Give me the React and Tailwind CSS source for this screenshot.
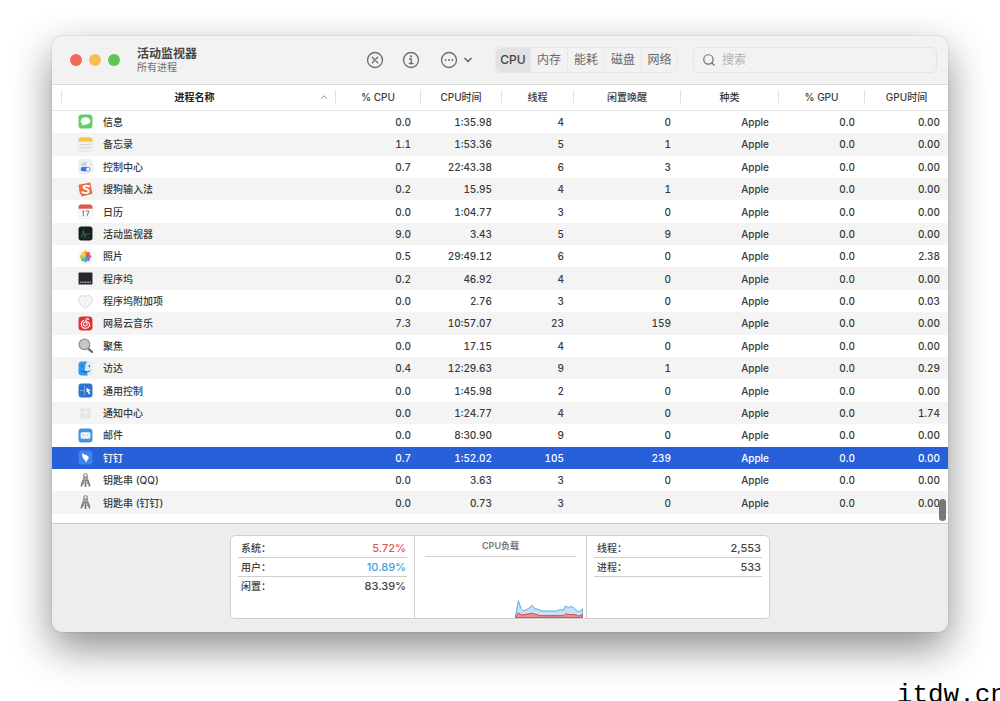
/**
 * Activity Monitor
 *
 * Process list window with toolbar, process table and CPU summary footer.
 */

import React from 'react';
import { ChevronDown, ChevronUp, Search } from 'lucide-react';

const COLUMNS = [
  { key: 'name', label: '进程名称', width: '' },
  { key: 'cpu', label: '% CPU', width: 'w-[85px]' },
  { key: 'time', label: 'CPU时间', width: 'w-[81px]' },
  { key: 'threads', label: '线程', width: 'w-[72px]' },
  { key: 'wakes', label: '闲置唤醒', width: 'w-[107px]' },
  { key: 'kind', label: '种类', width: 'w-[98px]' },
  { key: 'gpu', label: '% GPU', width: 'w-[86px]' },
  { key: 'gpuTime', label: 'GPU时间', width: 'w-[83px]' },
];

const PROCESSES = [
  ['messages', '信息', '0.0', '1:35.98', '4', '0', '0.00'],
  ['notes', '备忘录', '1.1', '1:53.36', '5', '1', '0.00'],
  ['control', '控制中心', '0.7', '22:43.38', '6', '3', '0.00'],
  ['sogou', '搜狗输入法', '0.2', '15.95', '4', '1', '0.00'],
  ['calendar', '日历', '0.0', '1:04.77', '3', '0', '0.00'],
  ['activity', '活动监视器', '9.0', '3.43', '5', '9', '0.00'],
  ['photos', '照片', '0.5', '29:49.12', '6', '0', '2.38'],
  ['dock', '程序坞', '0.2', '46.92', '4', '0', '0.00'],
  ['extra', '程序坞附加项', '0.0', '2.76', '3', '0', '0.03'],
  ['netease', '网易云音乐', '7.3', '10:57.07', '23', '159', '0.00'],
  ['spotlight', '聚焦', '0.0', '17.15', '4', '0', '0.00'],
  ['finder', '访达', '0.4', '12:29.63', '9', '1', '0.29'],
  ['universal', '通用控制', '0.0', '1:45.98', '2', '0', '0.00'],
  ['notification', '通知中心', '0.0', '1:24.77', '4', '0', '1.74'],
  ['mail', '邮件', '0.0', '8:30.90', '9', '0', '0.00'],
  ['dingtalk', '钉钉', '0.7', '1:52.02', '105', '239', '0.00'],
  ['keychain', '钥匙串 (QQ)', '0.0', '3.63', '3', '0', '0.00'],
  ['keychain', '钥匙串 (钉钉)', '0.0', '0.73', '3', '0', '0.00'],
];

const PETALS = ['#f6a623', '#e8553f', '#c856a5', '#7d6fd0', '#4a9fe0', '#4fc08a', '#a5cc3f', '#f3d33b'];

const ICONS = {
  messages: (
    <>
      <rect x="1" y="1" width="26" height="26" rx="6" fill="#5fd063" />
      <ellipse cx="14" cy="13" rx="9" ry="7" fill="#fff" />
      <path d="M8 17l-1 5 6-3z" fill="#fff" />
    </>
  ),
  notes: (
    <>
      <rect x="1" y="1" width="26" height="26" rx="5" fill="#f2f1ee" stroke="#dddcd8" />
      <path d="M1 9V6a5 5 0 015-5h16a5 5 0 015 5v3z" fill="#f4c545" />
      <path d="M4 14h20M4 20h20" stroke="#cfcdc8" strokeWidth="1.5" />
    </>
  ),
  control: (
    <>
      <rect x="1" y="1" width="26" height="26" rx="6" fill="#eef0f4" stroke="#e0e3e8" />
      <rect x="6" y="6" width="17" height="7" rx="3.5" fill="#c9d3e6" />
      <circle cx="19" cy="9.500" r="3" fill="#fff" />
      <rect x="5" y="15" width="18" height="8" rx="4" fill="#3c75e0" />
      <circle cx="18.500" cy="19" r="3" fill="#fff" />
    </>
  ),
  sogou: (
    <>
      <path d="M1 5l22-4 4 21-20 5-4-8z" fill="#ec6b36" />
      <path d="M21 8c-5-2-11-1-11 2 0 4 10 2 10 7 0 4-7 5-12 2" fill="none" stroke="#fff" strokeWidth="3.500" strokeLinecap="round" />
    </>
  ),
  calendar: (
    <>
      <rect x="1" y="1" width="26" height="26" rx="6" fill="#fafafa" stroke="#dedede" />
      <path d="M1 9V6a5 5 0 015-5h16a5 5 0 015 5v3z" fill="#e2574f" />
      <path d="M8 14l2-1.500V23M14 13h6.500l-4 10" fill="none" stroke="#777" strokeWidth="1.800" />
    </>
  ),
  activity: (
    <>
      <rect x="1" y="1" width="26" height="26" rx="5" fill="#16201f" />
      <path d="M5 18h3l2-10 3 12 2-5h8" fill="none" stroke="#4a756a" strokeWidth="1.500" />
      <path d="M5 22h18" stroke="#3c5650" />
    </>
  ),
  photos: (
    <>
      <rect x="1" y="1" width="26" height="26" rx="6" fill="#fbfbfb" stroke="#ececec" />
      {PETALS.map((color, i) => (
        <ellipse key={color} cx="14" cy="8.500" rx="3.500" ry="5.500" fill={color} opacity="0.9" transform={`rotate(${i * 45} 14 14)`} />
      ))}
    </>
  ),
  dock: (
    <>
      <rect x="1" y="3" width="26" height="22" rx="1" fill="#25272a" />
      <path d="M4 21h20" stroke="#a9abae" strokeWidth="2.500" strokeDasharray="2 1" />
    </>
  ),
  extra: (
    <>
      <path d="M14 27L4 19 1 9l5-6 8 1 8-1 5 6-3 10z" fill="#f6f6f6" stroke="#cfcfcf" strokeWidth="1.500" strokeLinejoin="round" />
      <path d="M8 9l6 4 6-4M14 13v7" fill="none" stroke="#e2e2e2" strokeWidth="1.500" />
    </>
  ),
  netease: (
    <>
      <rect x="1" y="1" width="26" height="26" rx="6" fill="#dc3436" />
      <path
        d="M11 8c-9 5-4 15 3 15 6 0 9-5 7-9-2-5-10-4-11 1 0 4 6 5 7 1L15 8c0-3 3-4 5-2"
        fill="none"
        stroke="#fff"
        strokeWidth="2"
        strokeLinecap="round"
      />
    </>
  ),
  spotlight: (
    <>
      <path d="M18 19l8 7" stroke="#6b6b6b" strokeWidth="4" strokeLinecap="round" />
      <circle cx="12" cy="12" r="10" fill="#c4c6c7" stroke="#858585" strokeWidth="2" />
    </>
  ),
  finder: (
    <>
      <rect x="1" y="1" width="26" height="26" rx="6" fill="#dfebf6" />
      <path d="M17 1H7a6 6 0 00-6 6v14a6 6 0 006 6h11c-1-3-1-6-1-9h-4c0-7 1-12 4-17z" fill="#3699ee" />
      <path d="M8 8v3M21 8v3M6 18c5 4 12 4 16 0" fill="none" stroke="#24507f" strokeWidth="1.800" strokeLinecap="round" />
    </>
  ),
  universal: (
    <>
      <rect x="1" y="1" width="26" height="26" rx="6" fill="#2f72cf" />
      <path d="M12 6v16M4 14h8" stroke="#b9d6f7" strokeWidth="1.500" strokeDasharray="3 1.500" />
      <path d="M16 9l8 5-4 1 3 5-3 1-2-5-2 2z" fill="#fff" />
    </>
  ),
  notification: (
    <>
      <rect x="4" y="4" width="20" height="20" rx="4" fill="#dfe6e6" />
      <path d="M14 5v18M5 12h18" stroke="#f6f8f8" strokeWidth="1.500" />
    </>
  ),
  mail: (
    <>
      <rect x="1" y="1" width="26" height="26" rx="6" fill="#4591e0" />
      <rect x="5" y="8" width="18" height="12" rx="2" fill="#f3f8fd" />
      <path d="M6 9l8 6 8-6M6 19l5-5M22 19l-5-5" fill="none" stroke="#9cc3ea" strokeWidth="1.300" />
    </>
  ),
  dingtalk: (
    <>
      <rect x="1" y="1" width="26" height="26" rx="6" fill="#3d83f2" />
      <path d="M8 6c4 3 10 3 12 7 1 3-2 4-3 5h2l-6 6 1-5c-4-1-4-3-4-4-2-2-3-5-2-9z" fill="#fff" />
    </>
  ),
  keychain: (
    <>
      <circle cx="14" cy="5" r="3.500" fill="none" stroke="#858786" strokeWidth="2" />
      <circle cx="14" cy="11" r="4.500" fill="#a4a6a5" stroke="#6c6e6d" />
      <path d="M10 13L6 25M14 14v12M18 13l4 12" stroke="#777978" strokeWidth="3.200" />
      <path d="M7 18l4 2M21 18l-4 2" stroke="#777978" strokeWidth="2.500" />
    </>
  ),
};

function AppIcon({ name }) {
  return (
    <svg viewBox="0 0 28 28" className="size-[15px] shrink-0" aria-hidden="true">
      {ICONS[name]}
    </svg>
  );
}

function ToolIcon({ children }) {
  return (
    <svg viewBox="0 0 18 18" className="size-[18px]" fill="none" stroke="currentColor" strokeWidth="1.300" strokeLinecap="round">
      <circle cx="9" cy="9" r="7.500" />
      {children}
    </svg>
  );
}

function Toolbar() {
  return (
    <header className="flex h-[49px] items-center border-b border-[#dcdbdc] bg-[#f3f2f3] pr-[11px] pl-[18px]">
      <div className="flex gap-[7px]">
        <button aria-label="关闭" className="size-3 rounded-full bg-[#ec6a5e]" />
        <button aria-label="最小化" className="size-3 rounded-full bg-[#f4bf4f]" />
        <button aria-label="缩放" className="size-3 rounded-full bg-[#61c554]" />
      </div>
      <div className="ml-[17px] flex-1 pb-0.5">
        <h1 className="text-[12px] leading-[15px] font-bold text-[#454545]">活动监视器</h1>
        <p className="text-[10px] leading-3 text-[#6f6f6f]">所有进程</p>
      </div>

      <div className="flex items-center text-[#6c6c6c]">
        <button aria-label="停止">
          <ToolIcon>
            <path d="M6.300 6.300l5.400 5.400M11.700 6.300l-5.400 5.400" />
          </ToolIcon>
        </button>
        <button aria-label="简介" className="ml-[18px]">
          <ToolIcon>
            <path d="M7.500 8h1.700v4.500M7.300 12.500h3.700" />
            <circle cx="9" cy="5.300" r="0.500" fill="currentColor" />
          </ToolIcon>
        </button>
        <button aria-label="更多" className="ml-5 flex items-center gap-1">
          <ToolIcon>
            <path d="M5.600 9h0M9 9h0M12.400 9h0" strokeWidth="1.900" />
          </ToolIcon>
          <ChevronDown size={12} strokeWidth={3.500} />
        </button>
      </div>

      <nav className="ml-[21px] flex h-[26px] divide-x divide-[#e8e7e8] overflow-hidden rounded-md border border-[#e8e7e8] text-[12px] text-[#686868]">
        <button className="w-[35px] bg-[#e2e1e3] font-medium text-[#444]">CPU</button>
        <button className="w-[37px]">内存</button>
        <button className="w-[37px]">能耗</button>
        <button className="w-[37px]">磁盘</button>
        <button className="w-[35px]">网络</button>
      </nav>

      <label className="ml-[15px] flex h-[26px] w-[244px] items-center gap-1.5 rounded-md border border-[#e6e5e6] px-2">
        <Search size={14} className="text-[#6c6c6c]" />
        <input
          type="search"
          aria-label="搜索"
          placeholder="搜索"
          className="min-w-0 flex-1 bg-transparent text-[12px] outline-none placeholder:text-[#b4b3b4]"
        />
      </label>
    </header>
  );
}

function ProcessRow({ process, selected }) {
  const [icon, name, cpu, time, threads, wakes, gpuTime] = process;
  const values = [cpu, time, threads, wakes, 'Apple', '0.0'];

  return (
    <tr className={selected ? 'bg-[#2760d8] text-white' : 'even:bg-[#f4f4f5]'}>
      <td className="pl-[26px]">
        <div className="flex items-center gap-[10px]">
          <AppIcon name={icon} />
          {name}
        </div>
      </td>
      {values.map((value, idx) => (
        <td key={idx} className="pr-[10px] text-right">
          {value}
        </td>
      ))}
      <td className="pr-2 text-right">{gpuTime}</td>
    </tr>
  );
}

function ProcessTable() {
  return (
    <section className="relative bg-white pb-[9px]">
      <table className="h-[429px] w-full table-fixed text-[10px] leading-[14px] font-medium text-[#3a3a3a] tabular-nums">
        <thead>
          <tr className="h-[25px] border-b border-[#e4e4e4]">
            {COLUMNS.map((col, idx) => (
              <th key={col.key} className={`${col.width} p-0 font-medium`}>
                {idx === 0 ? (
                  <div className="ml-[9px] flex items-center border-x border-[#e2e2e2] pr-[6px] font-bold text-[#222]">
                    <span className="flex-1 pl-[8px]">{col.label}</span>
                    <ChevronUp size={10} className="text-[#777]" />
                  </div>
                ) : (
                  <div className={idx < COLUMNS.length - 1 ? 'border-r border-[#e2e2e2]' : ''}>{col.label}</div>
                )}
              </th>
            ))}
          </tr>
        </thead>
        <tbody>
          {PROCESSES.map((process) => (
            <ProcessRow key={process[1]} process={process} selected={process[0] === 'dingtalk'} />
          ))}
        </tbody>
      </table>
      {/* scrollbar thumb */}
      <div className="absolute right-0.5 bottom-0.5 h-[22px] w-[7px] rounded-full bg-[#777]" />
    </section>
  );
}

function Stat({ label, value, color = '', last = false }) {
  return (
    <div className={`flex h-[19px] items-center justify-between pr-px pl-[3px] ${last ? '' : 'border-b border-[#cfcfcf]'}`}>
      <dt>{label}：</dt>
      <dd className={`text-[11px] ${color}`}>{value}</dd>
    </div>
  );
}

function LoadChart() {
  return (
    <svg viewBox="0 0 204 54" className="h-[18px] w-[68px]" aria-hidden="true">
      <path
        d="M1 53L10 2l8 24 7 7 15-7 12-10 7 10 11 2 10 5h45l10-4 10 1 6-12 10 5 9-4 9 7 10 9 7-2 7-7v25z"
        fill="#c9e0f4"
        stroke="#5ba9dc"
        strokeWidth="3"
      />
      <path d="M1 53l9-14 10 6 32-5 23 7h70l7-5 15 2h13l10 4 13-4v9z" fill="#ec9094" stroke="#cf4a55" strokeWidth="3" />
    </svg>
  );
}

function Summary() {
  return (
    <footer className="flex justify-center border-t border-[#cbcbcb] bg-[#ededed] pt-[11px] pb-[13px]">
      <div className="grid h-[84px] w-[540px] grid-cols-[184px_172px_1fr] divide-x divide-[#cfcfcf] rounded-[5px] border border-[#cfcfcf] bg-white text-[10px] font-medium text-[#3f3f3f]">
        <dl className="px-[7px] pt-[3px]">
          <Stat label="系统" value="5.72%" color="text-[#e2564e]" />
          <Stat label="用户" value="10.89%" color="text-[#41a0dc]" />
          <Stat label="闲置" value="83.39%" last />
        </dl>
        <div className="flex flex-col justify-between">
          <h2 className="mx-[10px] h-[21px] border-b border-[#cfcfcf] text-center text-[9px] leading-[20px] font-semibold text-[#777]">
            CPU负载
          </h2>
          <div className="flex justify-end pr-[3px]">
            <LoadChart />
          </div>
        </div>
        <dl className="px-[7px] pt-[3px]">
          <Stat label="线程" value="2,553" />
          <Stat label="进程" value="533" />
        </dl>
      </div>
    </footer>
  );
}

export default function App() {
  return (
    <div className="relative min-h-screen overflow-hidden bg-white px-[52px] pt-9 font-['Inter','Noto_Sans_CJK_SC',sans-serif]">
      <main className="overflow-hidden rounded-[10px] shadow-[0_0_1px_rgba(0,0,0,0.5),0_16px_40px_rgba(0,0,0,0.45)]">
        <Toolbar />
        <ProcessTable />
        <Summary />
      </main>
      <p className="absolute -right-[6px] -bottom-2.5 font-['Liberation_Mono',monospace] text-[26px] leading-8 text-black">itdw.cn</p>
    </div>
  );
}
